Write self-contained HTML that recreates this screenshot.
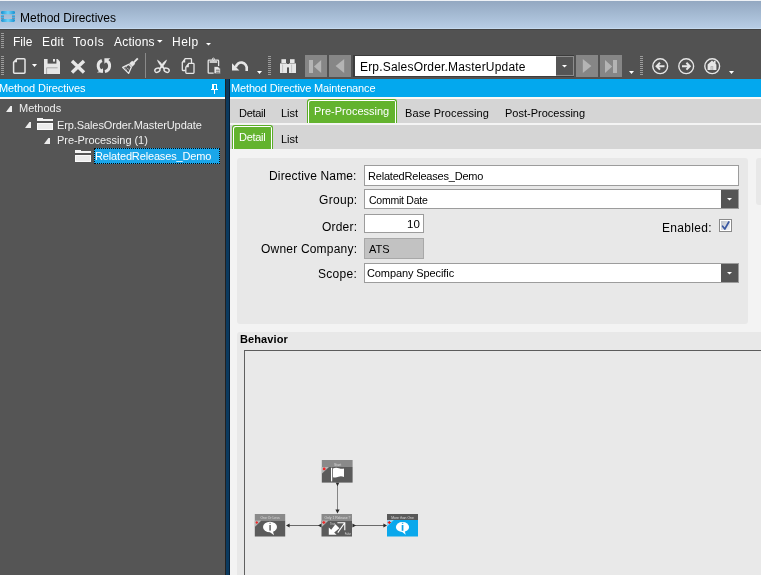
<!DOCTYPE html>
<html><head><meta charset="utf-8">
<style>
*{margin:0;padding:0;box-sizing:border-box}
html,body{width:761px;height:575px;overflow:hidden;background:#e9e9e9;font-family:"Liberation Sans",sans-serif;font-size:12px;position:relative}
.a{position:absolute;white-space:nowrap}
.t11{font-size:11px;line-height:13px}
.t12{font-size:12px;line-height:14px}
svg{position:absolute;overflow:visible}
</style></head><body><div id="root" style="position:absolute;left:0;top:0;width:761px;height:575px;will-change:transform">
<!-- title bar -->
<div class="a" style="left:0;top:0;width:761px;height:29px;background:linear-gradient(#93a8c1,#b8cee6);border-top:1px solid #eef2f6"></div>
<div class="a" style="left:0;top:28px;width:761px;height:1px;background:#c4d9ee"></div>
<svg style="left:1px;top:11px" width="14" height="11" viewBox="0 0 14 11">
 <defs><linearGradient id="ig" x1="0" y1="0" x2="1" y2="0"><stop offset="0" stop-color="#1590d0"/><stop offset="0.5" stop-color="#6dd2fa"/><stop offset="1" stop-color="#1590d0"/></linearGradient></defs>
 <rect x="0" y="0" width="14" height="3.2" rx="1.4" fill="url(#ig)"/>
 <rect x="0" y="8" width="14" height="3" rx="1.4" fill="url(#ig)"/>
 <rect x="0" y="4" width="3" height="1" fill="#3fb6ee"/><rect x="0" y="5" width="3" height="1" fill="#6f8fae"/><rect x="0" y="6" width="3" height="1" fill="#3fb6ee"/><rect x="0" y="7" width="3" height="1" fill="#6f8fae"/>
 <rect x="11" y="4" width="3" height="1" fill="#3fb6ee"/><rect x="11" y="5" width="3" height="1" fill="#6f8fae"/><rect x="11" y="6" width="3" height="1" fill="#3fb6ee"/><rect x="11" y="7" width="3" height="1" fill="#6f8fae"/>
</svg>
<div class="a t12" style="left:20px;top:11px;color:#000">Method Directives</div>

<!-- menubar + toolbar -->
<div class="a" style="left:0;top:29px;width:761px;height:50px;background:#525252"></div>
<div class="a" style="left:0;top:78px;width:761px;height:1px;background:#57504c"></div>
<div class="a" style="left:0;top:29px;width:761px;height:1px;background:#444"></div>
<div class="a" style="left:1px;top:33px;width:3px;height:15px;background:repeating-linear-gradient(#9c9c9c 0 1px,transparent 1px 2px)"></div>
<div class="a" style="left:1px;top:56px;width:3px;height:19px;background:repeating-linear-gradient(#9c9c9c 0 1px,transparent 1px 2px)"></div>
<div class="a t12" style="left:13px;top:35px;color:#fff">File</div>
<div class="a t12" style="left:42px;top:35px;color:#fff;letter-spacing:0.4px">Edit</div>
<div class="a t12" style="left:73px;top:35px;color:#fff;letter-spacing:0.7px">Tools</div>
<div class="a t12" style="left:114px;top:35px;color:#fff;letter-spacing:0.2px">Actions</div>
<svg style="left:157px;top:40px" width="6" height="3"><path d="M0 0h5.6L2.8 2.8z" fill="#fff"/></svg>
<div class="a t12" style="left:172px;top:35px;color:#fff;letter-spacing:0.5px">Help</div>
<svg style="left:206px;top:43px" width="5" height="3"><path d="M0 0h5L2.5 2.5z" fill="#fff"/></svg>

<!-- toolbar icons -->
<div class="a" style="left:305px;top:55px;width:22px;height:22px;background:#868686"></div>
<div class="a" style="left:329px;top:55px;width:22px;height:22px;background:#868686"></div>
<div class="a" style="left:576px;top:55px;width:22px;height:22px;background:#868686"></div>
<div class="a" style="left:600px;top:55px;width:22px;height:22px;background:#868686"></div>
<div class="a" style="left:353px;top:55px;width:221px;height:22px;background:#fff;border:1px solid #3c3c3c;border-left:2px solid #3c3c3c"></div>
<div class="a" style="left:556px;top:56px;width:18px;height:20px;background:#555;border:1px solid #8c8c8c;border-left:none"></div>
<div class="a t12" style="left:360px;top:60px;color:#000;letter-spacing:0.18px">Erp.SalesOrder.MasterUpdate</div>
<div class="a" style="left:145px;top:53px;width:1px;height:25px;background:#8a8a8a"></div>
<div class="a" style="left:268px;top:56px;width:3px;height:19px;background:repeating-linear-gradient(#9c9c9c 0 1px,transparent 1px 2px)"></div>
<div class="a" style="left:640px;top:56px;width:3px;height:19px;background:repeating-linear-gradient(#9c9c9c 0 1px,transparent 1px 2px)"></div>
<svg style="left:0;top:0" width="761" height="80">
 <g fill="#fff">
  <path d="M32 64H37L34.5 67Z"/><path d="M257 71H262L259.5 74Z"/><path d="M629 71H634L631.5 74Z"/><path d="M729 71H734L731.5 74Z"/><path d="M562 65H567L564.5 67.5Z"/>
 </g>
 <g fill="none" stroke="#e6e6e6">
  <!-- new doc -->
  <path d="M17 58.8H24Q25 58.8 25 59.8V72.3Q25 73.2 24 73.2H14.5Q13.6 73.2 13.6 72.3V62.2Z" stroke-width="1.5" stroke-linejoin="round"/>
  <!-- X -->
  <path d="M72 61L84 72.5M84 61L72 72.5" stroke-width="3.4"/>
  <!-- refresh -->
  <path d="M101.9 60.5A5.8 5.8 0 0 0 102.9 71.6" stroke-width="3"/>
  <path d="M104.9 71.6A5.8 5.8 0 0 0 105.9 60.5" stroke-width="3"/>
  <!-- broom handle -->
  <path d="M137.8 58.4L133.4 62.8" stroke-width="1.9"/>
  <!-- scissors -->
  <ellipse cx="157.4" cy="70.2" rx="2.7" ry="2.0" stroke-width="1.4" transform="rotate(-28 157.4 70.2)"/>
  <ellipse cx="166.6" cy="70.2" rx="2.7" ry="2.0" stroke-width="1.4" transform="rotate(28 166.6 70.2)"/>
  <!-- copy -->
  <path d="M191.5 63V59.4Q191.5 58.6 190.7 58.6H185.2L182.3 62.4V69.8Q182.3 70.5 183 70.5H185.6" stroke-width="1.3"/>
  <path d="M188.8 63.4H193.2Q194 63.4 194 64.2V72.6Q194 73.4 193.2 73.4H186.6Q185.8 73.4 185.8 72.6V67.2Z" fill="#525252" stroke-width="1.3"/>
  <!-- paste -->
  <path d="M214 73.2H208.9Q208.2 73.2 208.2 72.5V60.9Q208.2 60.2 208.9 60.2H217.9Q218.6 60.2 218.6 60.9V66" stroke-width="1.3"/><circle cx="213.4" cy="59.2" r="1.1" stroke-width="0.9"/>
  <!-- undo -->
  <path d="M235.8 67.2A5.4 5.4 0 0 1 246.7 69V71" stroke-width="2.6"/>
  <!-- circles -->
  <circle cx="660.2" cy="66.2" r="7.4" stroke-width="1.4"/>
  <circle cx="686.2" cy="66.2" r="7.4" stroke-width="1.4"/>
  <circle cx="712.2" cy="66.2" r="7.4" stroke-width="1.4"/>
  <path d="M664.5 66.2H657M660 62.8L656.6 66.2L660 69.6" stroke-width="2"/>
  <path d="M682 66.2H689.4M686.4 62.8L689.8 66.2L686.4 69.6" stroke-width="2"/>
 </g>
 <g fill="#e6e6e6">
  <path d="M13.6 62.2L17 58.8V62.2Z"/>
  <!-- save -->
  <path d="M44 59H57.6L60 61.4V74H44Z"/>
  <rect x="47.6" y="59" width="8.8" height="4.6" fill="#525252"/>
  <rect x="53" y="59" width="2" height="2.6"/>
  <path d="M46.6 74V67.8H57.6" fill="none" stroke="#a4a4a4" stroke-width="0.9"/>
  <!-- refresh heads -->
  <path d="M97 72.6H103V68.2Z"/>
  <path d="M104.4 58.2H110.4L104.4 63.8Z"/>
  <!-- broom head -->
  <path d="M132.4 66.8L129.2 63.6L132.2 60.8L135.2 63.8Z"/>
  <path d="M129.6 64.8L131.4 66.6" stroke="#525252" stroke-width="0.8"/>
  <path d="M128.8 64.4L131.4 67L128.6 73.4L122.6 67.4Z" fill="none" stroke="#e6e6e6" stroke-width="1.3" stroke-linejoin="round"/>
  <path d="M124.6 67.6L125.6 68.2M126 69.8L127 70.4M125.4 66.2L127 67M127.4 68.4L128.6 69.2" stroke="#d8d8d8" stroke-width="0.9"/>
  <!-- scissors blades -->
  <path d="M156.9 59.5Q160.8 61.4 164.8 68.2L163.6 69.2Q158.2 64 156.9 59.5Z"/>
  <path d="M167.1 59.5Q163.2 61.4 159.2 68.2L160.4 69.2Q165.8 64 167.1 59.5Z"/>
  <!-- paste clip + doc -->
  <rect x="209.6" y="61.2" width="7.6" height="1.6"/><path d="M182.3 62.4L185.2 58.6V62.4Z"/><path d="M185.8 67.2L188.8 63.4V67.2Z"/>
  <path d="M214 66.4H218L220.6 69V73.8H214Z" stroke="#525252" stroke-width="0.8"/>
  <path d="M216 70.2H219.6M216 72.2H219.6" stroke="#525252" stroke-width="0.8"/>
  <!-- undo head -->
  <path d="M232 63.2V70.6H239.4Z"/>
  <!-- binoculars -->
  <rect x="281.4" y="59.2" width="4.6" height="3.8"/>
  <rect x="290" y="59.2" width="4.6" height="3.8"/>
  <rect x="280" y="63.4" width="7" height="9.6"/>
  <rect x="289" y="63.4" width="7" height="9.6"/>
  <rect x="286.6" y="64" width="2.8" height="3.4"/>
  <path d="M282.6 64.5V72.5M291.6 64.5V72.5" stroke="#b8b8b8" stroke-width="0.8"/>
  <!-- home -->
  <path d="M707.6 70V64.6L712 60.6L713.8 62.2V60.8H715.6V64L716.4 64.6V70Z"/>
  <rect x="710.6" y="66.2" width="2.6" height="3.8" fill="#a8a8a8"/><rect x="711.2" y="66.9" width="1.4" height="3.1" fill="#d0d0d0"/>
 </g>
 <g fill="#b4b4b4">
  <rect x="309" y="60" width="4" height="13"/><path d="M321.2 60V73L314 66.5Z"/>
  <path d="M344.2 59V73L335.6 66Z"/>
  <path d="M582.8 59V73L591.4 66Z"/>
  <path d="M605 60V73L612.2 66.5Z"/><rect x="613" y="60" width="4" height="13"/>
 </g>
</svg>
<!-- panel headers -->
<div class="a" style="left:0;top:79px;width:225px;height:18px;background:#03a8ee"></div>
<div class="a t11" style="left:-1px;top:82px;color:#fff;letter-spacing:-0.1px">Method Directives</div>
<svg style="left:211px;top:84px" width="8" height="10" viewBox="0 0 8 10"><g fill="#fff"><rect x="1" y="0" width="5" height="1"/><rect x="1" y="0" width="2" height="5"/><rect x="5" y="0" width="1" height="5"/><rect x="0" y="5" width="7" height="1"/><rect x="3" y="6" width="1" height="4"/></g></svg>
<div class="a" style="left:230px;top:79px;width:531px;height:18px;background:#03a8ee"></div>
<div class="a t11" style="left:231px;top:82px;color:#fff;letter-spacing:-0.15px">Method Directive Maintenance</div>
<div class="a" style="left:0;top:97px;width:225px;height:2px;background:#fbf9f6"></div>
<div class="a" style="left:230px;top:97px;width:531px;height:2px;background:#fbf9f6"></div>

<!-- left panel -->
<div class="a" style="left:0;top:99px;width:225px;height:476px;background:#555555"></div>
<svg style="left:6px;top:106px" width="6" height="6"><path d="M4.4 0H6V6H0Z" fill="#ececec"/></svg>
<div class="a t11" style="left:19px;top:102px;color:#f0f0f0;letter-spacing:0px">Methods</div>
<svg style="left:25px;top:122px" width="6" height="6"><path d="M4.4 0H6V6H0Z" fill="#ececec"/></svg>
<svg style="left:37px;top:118px" width="16" height="12" viewBox="0 0 16 12"><path d="M0 0H6V1H16V3H0Z" fill="#f4f4f4"/><rect x="0.5" y="5.5" width="15" height="6" fill="#ececec" stroke="#fafafa"/></svg>
<div class="a t11" style="left:57px;top:119px;color:#f0f0f0;letter-spacing:-0.1px">Erp.SalesOrder.MasterUpdate</div>
<svg style="left:44px;top:138px" width="6" height="6"><path d="M4.4 0H6V6H0Z" fill="#ececec"/></svg>
<div class="a t11" style="left:57px;top:134px;color:#f0f0f0;letter-spacing:-0.05px">Pre-Processing (1)</div>
<svg style="left:75px;top:150px" width="16" height="12" viewBox="0 0 16 12"><path d="M0 0H6V1H16V3H0Z" fill="#f4f4f4"/><rect x="0.5" y="5.5" width="15" height="6" fill="#ececec" stroke="#fafafa"/></svg>
<div class="a" style="left:94px;top:148px;width:126px;height:16px;background:#1aa6ea;outline:1px dotted #0a0a0a;outline-offset:-1px"></div>
<div class="a t11" style="left:95px;top:150px;color:#fff;letter-spacing:-0.15px">RelatedReleases_Demo</div>

<!-- splitter -->
<div class="a" style="left:225px;top:79px;width:5px;height:496px;background:#0b3a5f;border-left:1px solid #222;border-right:1px solid #071f36"></div>

<!-- right panel -->
<div class="a" style="left:230px;top:99px;width:531px;height:24px;background:#d5d5d5"></div>
<div class="a" style="left:230px;top:123px;width:531px;height:2px;background:#f4f4f4"></div>
<div class="a" style="left:230px;top:125px;width:531px;height:24px;background:#d5d5d5"></div>
<div class="a" style="left:230px;top:149px;width:531px;height:426px;background:#f3f3f3"></div>

<div class="a t11" style="left:239px;top:107px;color:#000;letter-spacing:-0.3px">Detail</div>
<div class="a t11" style="left:281px;top:107px;color:#000">List</div>
<div class="a" style="left:307px;top:99px;width:90px;height:24px;background:#63b32e;border:1px solid #5aad28;border-bottom:none;border-radius:3px 3px 0 0;box-shadow:inset 1px 1px 0 #fff,inset -1px 0 0 #fff"></div>
<div class="a t11" style="left:314px;top:105px;color:#fff;letter-spacing:0px">Pre-Processing</div>
<div class="a t11" style="left:405px;top:107px;color:#000;letter-spacing:0.1px">Base Processing</div>
<div class="a t11" style="left:505px;top:107px;color:#000">Post-Processing</div>

<div class="a" style="left:232px;top:125px;width:41px;height:24px;background:#63b32e;border:1px solid #5aad28;border-bottom:none;border-radius:3px 3px 0 0;box-shadow:inset 1px 1px 0 #fff,inset -1px 0 0 #fff"></div>
<div class="a t11" style="left:239px;top:131px;color:#fff;letter-spacing:-0.3px">Detail</div>
<div class="a t11" style="left:281px;top:133px;color:#000">List</div>

<!-- form panel -->
<div class="a" style="left:237px;top:158px;width:511px;height:166px;background:#e8e8e8;border-radius:3px"></div>
<div class="a" style="left:756px;top:158px;width:20px;height:47px;background:#e8e8e8;border-radius:3px"></div>

<div class="a t12" style="left:269px;top:169px;color:#000;letter-spacing:0.15px">Directive Name:</div>
<div class="a t12" style="left:319px;top:193px;color:#000;letter-spacing:0.3px">Group:</div>
<div class="a t12" style="left:322px;top:220px;color:#000;letter-spacing:0.2px">Order:</div>
<div class="a t12" style="left:261px;top:242px;color:#000;letter-spacing:0.2px">Owner Company:</div>
<div class="a t12" style="left:318px;top:267px;color:#000;letter-spacing:0.3px">Scope:</div>
<div class="a t12" style="left:662px;top:221px;color:#000;letter-spacing:0.3px">Enabled:</div>

<div class="a" style="left:364px;top:165px;width:375px;height:21px;background:#fff;border:1px solid #9c9c9c"></div>
<div class="a t11" style="left:368px;top:170px;color:#000;letter-spacing:-0.2px">RelatedReleases_Demo</div>
<div class="a" style="left:364px;top:189px;width:375px;height:20px;background:#fff;border:1px solid #9c9c9c"></div>
<div class="a" style="left:721px;top:190px;width:17px;height:18px;background:#555"></div>
<svg style="left:727px;top:198px" width="5" height="3"><path d="M0 0h5L2.5 2.5z" fill="#fff"/></svg>
<div class="a t11" style="left:369px;top:194px;color:#000;font-size:10.5px;letter-spacing:-0.25px">Commit Date</div>
<div class="a" style="left:364px;top:214px;width:60px;height:19px;background:#fff;border:1px solid #9c9c9c"></div>
<div class="a t11" style="left:407px;top:218px;color:#000;font-size:11.5px">10</div>
<div class="a" style="left:364px;top:238px;width:60px;height:21px;background:#c2c2c2;border:1px solid #a8a8a8"></div>
<div class="a t11" style="left:369px;top:243px;color:#000">ATS</div>
<div class="a" style="left:364px;top:263px;width:375px;height:20px;background:#fff;border:1px solid #9c9c9c"></div>
<div class="a" style="left:721px;top:264px;width:17px;height:18px;background:#555"></div>
<svg style="left:727px;top:272px" width="5" height="3"><path d="M0 0h5L2.5 2.5z" fill="#fff"/></svg>
<div class="a t11" style="left:367px;top:267px;color:#000;letter-spacing:-0.1px">Company Specific</div>
<svg style="left:719px;top:219px" width="13" height="13" viewBox="0 0 13 13"><defs><linearGradient id="cg" x1="0" y1="0" x2="1" y2="1"><stop offset="0" stop-color="#bcc2cc"/><stop offset="1" stop-color="#f4f4f6"/></linearGradient></defs><rect x="0.5" y="0.5" width="12" height="12" fill="#fff" stroke="#8a8a8a"/><rect x="2" y="2" width="9" height="9" fill="url(#cg)"/><path d="M3.6 7.2L5.8 10L9.8 3" fill="none" stroke="#3a58a2" stroke-width="1.7" stroke-linecap="round" stroke-linejoin="round"/></svg>

<!-- behavior panel -->
<div class="a" style="left:237px;top:332px;width:530px;height:260px;background:#e8e8e8;border-radius:3px"></div>
<div class="a" style="left:240px;top:333px;color:#000;font-size:11px;line-height:13px;font-weight:bold;letter-spacing:0.1px">Behavior</div>
<div class="a" style="left:244px;top:350px;width:530px;height:240px;background:#e9e9e9;border-left:1px solid #606060;border-top:1px solid #5c5c5c"></div>

<!-- diagram -->
<svg style="left:0;top:0" width="761" height="575">
 <!-- connectors -->
 <path d="M337.5 484V512" stroke="#858585" stroke-width="1"/>
 <path d="M335.6 482.6H339.4L337.5 486.2Z" fill="#2a2a2a"/>
 <path d="M335.4 509.6H339.6L337.5 513.6Z" fill="#2a2a2a"/>
 <path d="M289 525.5H319" stroke="#6a6a6a" stroke-width="1"/>
 <path d="M289.6 523.4V527.6L286 525.5Z" fill="#2a2a2a"/>
 <path d="M321.5 523.4V527.6L318 525.5Z" fill="#2a2a2a"/>
 <path d="M355 525.5H384" stroke="#6a6a6a" stroke-width="1"/>
 <path d="M352.4 523.4V527.6L356 525.5Z" fill="#2a2a2a"/>
 <path d="M383.4 523.4V527.6L387 525.5Z" fill="#2a2a2a"/>
 <g font-family="Liberation Sans" font-size="4.6" fill="#dcdcdc" text-anchor="middle">
 <!-- start node -->
 <rect x="321.8" y="460" width="30.8" height="7" fill="#8a8a8a"/>
 <rect x="321.8" y="467" width="30.8" height="15.6" fill="#5b5b5b"/>
 <path d="M322 467H329L322 473.4Z" fill="#b6b6b6"/>
 <circle cx="324.2" cy="468.9" r="1.4" fill="#f02828"/>
 <rect x="331" y="467.8" width="1.2" height="13.6" fill="#fff"/>
 <path d="M333 468.4Q336 467 339 468.2T344 468.4V477Q341 475.8 338.5 476.8T333 477.2Z" fill="#fff"/>
 <text transform="translate(337.5 465.6) scale(0.5)" font-size="6.8">Start</text>
 <!-- decision node -->
 <rect x="321.5" y="514" width="30.5" height="6.5" fill="#8a8a8a"/>
 <rect x="321.5" y="520.5" width="30.5" height="16" fill="#5b5b5b"/>
 <path d="M322 520.5H328.6L322 526.8Z" fill="#b6b6b6"/>
 <path d="M323.8 520.9V523.9M322.3 522.4H325.3" stroke="#f02828" stroke-width="1.2"/>
 <path d="M328.8 527.4L331.2 529.8L335.4 524.2L339.4 528.2L334.2 532.4L336.6 534.8H328.8Z" fill="#fff"/>
 <path d="M337.4 522.8H344.8V530.2M344.6 523L337.8 532.6" fill="none" stroke="#fff" stroke-width="1.1"/>
 <text transform="translate(337.5 519.0) scale(0.5)" font-size="6.8">Only 1 Release ?</text>
 <text transform="translate(330.0 524.6) scale(0.5)" font-size="5.2"  text-anchor="start">True</text>
 <text transform="translate(351.0 534.8) scale(0.5)" font-size="5.2"  text-anchor="end">False</text>
 <!-- one or less node -->
 <rect x="254.8" y="514" width="30.4" height="6.5" fill="#8a8a8a"/>
 <rect x="254.8" y="520.5" width="30.4" height="16" fill="#5b5b5b"/>
 <path d="M255 520.5H261.4L255 526.8Z" fill="#b6b6b6"/>
 <path d="M256.8 521.1L258.2 522.5L256.8 523.9L255.4 522.5Z" fill="#f02828"/>
 <ellipse cx="270" cy="527" rx="7" ry="5.2" fill="#fff"/>
 <path d="M268.5 531L274 535.2L272.6 530Z" fill="#fff"/>
 <rect x="269.2" y="525" width="1.8" height="5.6" fill="#7a7a7a"/>
 <rect x="269.4" y="522.8" width="1.4" height="1" fill="#7a7a7a"/>
 <text transform="translate(270.0 519.0) scale(0.5)" font-size="6.8">One Or Less</text>
 <!-- more than one -->
 <rect x="387" y="514" width="31" height="6" fill="#595959"/>
 <rect x="387" y="520" width="31" height="16.5" fill="#0aa8ec"/>
 <path d="M387 520H393.8L387 526.8Z" fill="#8ed5f6"/>
 <path d="M389.3 520.9V524.1M387.7 522.5H390.9" stroke="#f01818" stroke-width="1.2"/>
 <ellipse cx="402.5" cy="527" rx="6.6" ry="5.1" fill="#fff"/>
 <path d="M401 531L405.6 534.8L404.6 530Z" fill="#fff"/>
 <rect x="401.7" y="525" width="1.7" height="5.8" fill="#12a2e4"/>
 <rect x="401.9" y="522.8" width="1.4" height="1" fill="#12a2e4"/>
 <text transform="translate(402.5 518.8) scale(0.5)" font-size="6.8">More than One</text>
 </g>
</svg>
</div></body></html>
